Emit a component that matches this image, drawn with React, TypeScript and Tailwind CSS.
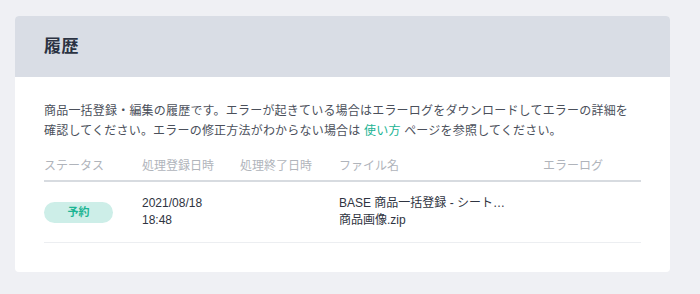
import React from 'react';

const columns = ['ステータス', '処理登録日時', '処理終了日時', 'ファイル名', 'エラーログ'];

export default function App() {
    return (
        <div
            className="w-[700px] h-[294px] bg-[#eff0f4] pt-[16px] pl-[15px]"
            style={{ fontFamily: '"Liberation Sans", "Noto Sans CJK JP", sans-serif' }}
        >
            <div className="w-[655px] bg-white rounded-[4px] overflow-hidden">
                {/* Header */}
                <div className="h-[61px] bg-[#d9dde5] flex items-center px-[29px]">
                    <h2 className="text-[17px] font-bold text-[#2b3242] tracking-[0.5px]">履歴</h2>
                </div>

                {/* Body */}
                <div className="px-[29px] pt-[24px] pb-[29px]">
                    <p className="text-[12px] leading-[20px] tracking-[0.2px] text-[#4b505b] whitespace-nowrap">
                        商品一括登録・編集の履歴です。エラーが起きている場合はエラーログをダウンロードしてエラーの詳細を
                        <br />
                        確認してください。エラーの修正方法がわからない場合は <span className="text-[#19b393]">使い方</span> ページを参照してください。
                    </p>

                    <div className="mt-[16px] w-[597px]">
                        <div className="grid grid-cols-[98px_98px_99px_204px_98px] h-[25px] items-start border-b-2 border-[#d7dbe0] text-[12px] leading-[18px] text-[#b0b4bb]">
                            {columns.map((c) => (
                                <div key={c}>{c}</div>
                            ))}
                        </div>
                        <div className="grid grid-cols-[98px_98px_99px_204px_98px] h-[61px] items-center border-b border-[#eceef1] text-[12px] leading-[17px] text-[#2f3441]">
                            <div>
                                <span className="inline-flex items-center justify-center w-[69px] h-[21px] rounded-full bg-[#cdeee8] text-[#1db593] text-[11px] font-bold">
                                    予約
                                </span>
                            </div>
                            <div>
                                <div>2021/08/18</div>
                                <div>18:48</div>
                            </div>
                            <div></div>
                            <div>
                                <div>BASE 商品一括登録 - シート…</div>
                                <div>商品画像.zip</div>
                            </div>
                            <div></div>
                        </div>
                    </div>
                </div>
            </div>
        </div>
    );
}
